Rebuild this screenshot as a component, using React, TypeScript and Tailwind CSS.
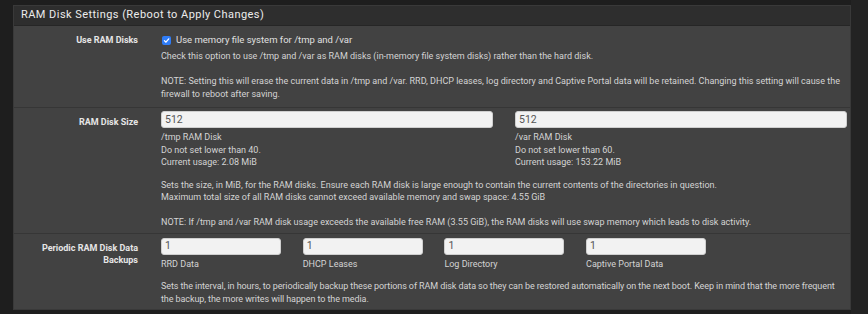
import React from "react";

const help = "text-[9px] leading-[12.5px] text-[#d4d4d4]";

function Input({ value, className }: { value: string; className?: string }) {
  return (
    <div
      className={
        "h-[17px] rounded-[3px] bg-[#f2f2f2] border border-[#cfcfcf] flex items-center pl-[3px] text-[10.5px] text-[#555] " +
        (className ?? "")
      }
    >
      {value}
    </div>
  );
}

function Label({ children, pt }: { children: React.ReactNode; pt: string }) {
  return (
    <div
      className={
        "w-[124px] shrink-0 text-right font-bold text-[9px] leading-[12.5px] text-[#e6e6e6] " + pt
      }
    >
      {children}
    </div>
  );
}

export default function App() {
  return (
    <div
      className="w-[868px] h-[314px] bg-[#1e1e1e] flex overflow-hidden"
      style={{ fontFamily: "Roboto, 'Liberation Sans', sans-serif" }}
    >
      <div className="w-[851px] shrink-0 pl-[13px] pt-[5px]">
        <div className="border border-[#393939] bg-[#424242]">
          <div className="h-[20px] bg-[#2e2e2e] border-b border-[#262626] flex items-center pl-[7px] text-[11px] tracking-[0.45px] text-[#ececec]">
            RAM Disk Settings (Reboot to Apply Changes)
          </div>

          {/* Row 1 */}
          <div className="flex border-b border-[#363636]">
            <Label pt="pt-[8px]">Use RAM Disks</Label>
            <div className="ml-[23px] pt-[8px] pb-[7px] pr-[4px]">
              <div className="h-[13px] flex items-center gap-[5px]">
                <div className="w-[9px] h-[9px] rounded-[2px] bg-[#2f7cf6] flex items-center justify-center ml-[1px]">
                  <svg width="7" height="7" viewBox="0 0 10 10">
                    <path d="M2 5.2 L4.2 7.4 L8.2 2.6" stroke="white" strokeWidth="1.8" fill="none" strokeLinecap="round" strokeLinejoin="round" />
                  </svg>
                </div>
                <span className="text-[9.5px] text-[#e0e0e0]">Use memory file system for /tmp and /var</span>
              </div>
              <div className={help + " mt-[3px]"}>
                Check this option to use /tmp and /var as RAM disks (in-memory file system disks) rather than the hard disk.
                <br />
                <br />
                NOTE: Setting this will erase the current data in /tmp and /var. RRD, DHCP leases, log directory and Captive Portal data will be retained. Changing this setting will cause the firewall to reboot after saving.
              </div>
            </div>
          </div>

          {/* Row 2 */}
          <div className="flex border-b border-[#363636]">
            <Label pt="pt-[8px]">RAM Disk Size</Label>
            <div className="ml-[23px] pt-[3px] pb-[4px] pr-[3px] flex-1">
              <div className="flex gap-[22px]">
                <div className="w-[332px]">
                  <Input value="512" />
                  <div className={help + " mt-[3px]"}>
                    /tmp RAM Disk
                    <br />
                    Do not set lower than 40.
                    <br />
                    Current usage: 2.08 MiB
                  </div>
                </div>
                <div className="flex-1">
                  <Input value="512" />
                  <div className={help + " mt-[3px]"}>
                    /var RAM Disk
                    <br />
                    Do not set lower than 60.
                    <br />
                    Current usage: 153.22 MiB
                  </div>
                </div>
              </div>
              <div className={help + " mt-[10px]"}>
                Sets the size, in MiB, for the RAM disks. Ensure each RAM disk is large enough to contain the current contents of the directories in question.
                <br />
                Maximum total size of all RAM disks cannot exceed available memory and swap space: 4.55 GiB
                <br />
                <br />
                NOTE: If /tmp and /var RAM disk usage exceeds the available free RAM (3.55 GiB), the RAM disks will use swap memory which leads to disk activity.
              </div>
            </div>
          </div>

          {/* Row 3 */}
          <div className="flex">
            <Label pt="pt-[8px]">
              Periodic RAM Disk Data
              <br />
              Backups
            </Label>
            <div className="ml-[23px] pt-[4px] pb-[4px] pr-[3px] flex-1">
              <div className="flex gap-[21.7px]">
                {["RRD Data", "DHCP Leases", "Log Directory", "Captive Portal Data"].map((l) => (
                  <div key={l} className="w-[120px]">
                    <Input value="1" />
                    <div className={help + " mt-[3px]"}>{l}</div>
                  </div>
                ))}
              </div>
              <div className={help + " mt-[10px] tracking-[-0.09px] whitespace-nowrap"}>
                Sets the interval, in hours, to periodically backup these portions of RAM disk data so they can be restored automatically on the next boot. Keep in mind that the more frequent
                <br />
                the backup, the more writes will happen to the media.
              </div>
            </div>
          </div>
        </div>
      </div>
      <div className="flex-1 bg-[#232323]" />
    </div>
  );
}
